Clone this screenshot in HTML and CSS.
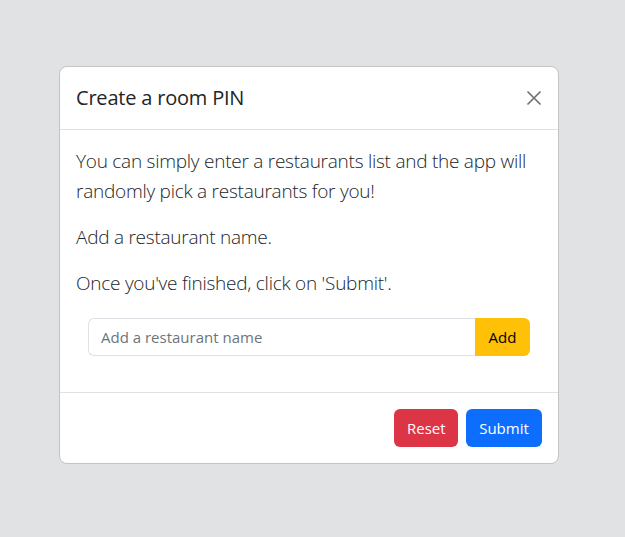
FILE: index.html
```html
<!DOCTYPE html>
<html lang="en">
<head>
<meta charset="utf-8">
<title>Create a room PIN</title>
<link rel="stylesheet" href="styles.css">
</head>
<body>
<div class="backdrop">
  <div class="modal">
    <div class="modal-header">
      <h5 class="modal-title">Create a room PIN</h5>
      <button class="btn-close" aria-label="Close">
        <svg width="16" height="16" viewBox="0 0 16 16"><path d="M1.5 1.5 L14.5 14.5 M14.5 1.5 L1.5 14.5" stroke="#000" stroke-width="1.7" fill="none"/></svg>
      </button>
    </div>
    <div class="modal-body">
      <p class="lead">You can simply enter a restaurants list and the app will randomly pick a restaurants for you!</p>
      <p class="lead">Add a restaurant name.</p>
      <p class="lead">Once you've finished, click on 'Submit'.</p>
      <div class="input-group">
        <input class="form-control" type="text" placeholder="Add a restaurant name">
        <button class="btn btn-warning">Add</button>
      </div>
    </div>
    <div class="modal-footer">
      <button class="btn btn-danger">Reset</button>
      <button class="btn btn-primary">Submit</button>
    </div>
  </div>
</div>
</body>
</html>
```
FILE: styles.css
```css
* { box-sizing: border-box; }
html, body { margin: 0; padding: 0; }
body {
  font-family: "Open Sans", "Noto Sans", sans-serif;
  color: #212529;
  background: #e1e2e4;
  width: 625px;
  height: 537px;
}
.backdrop {
  padding-top: 66px;
  padding-left: 59px;
}
.modal {
  width: 500px;
  background: #fff;
  border: 1px solid #c3c4c6;
  border-radius: 8px;
}
.modal-header {
  display: flex;
  align-items: center;
  justify-content: space-between;
  padding: 16px 16px;
  border-bottom: 1px solid #dee2e6;
  height: 63px;
}
.modal-title {
  margin: 0;
  font-size: 20px;
  font-weight: 500;
  line-height: 30px;
  letter-spacing: -0.2px;
}
.btn-close {
  border: 0;
  background: transparent;
  padding: 4px;
  margin-right: -4px;
  opacity: 0.55;
  display: flex;
}
.modal-body {
  padding: 16px 16px 0;
}
.lead {
  font-size: 19px;
  font-weight: 300;
  line-height: 30px;
  margin: 0 0 16px;
  letter-spacing: -0.25px;
}
.input-group {
  display: flex;
  margin: 20px 12px 36px;
  height: 38px;
}
.form-control {
  flex: 1;
  min-width: 0;
  border: 1px solid #dee2e6;
  border-right: 0;
  border-radius: 6px 0 0 6px;
  padding: 6px 12px;
  font-family: inherit;
  font-size: 15px;
  color: #212529;
  outline: none;
}
.form-control::placeholder { color: #6c757d; }
.btn {
  font-family: inherit;
  font-size: 15px;
  line-height: 24px;
  padding: 6px 12px;
  border: 1px solid transparent;
  border-radius: 6px;
  cursor: pointer;
}
.btn-warning {
  background: #ffc107;
  color: #000;
  border-radius: 0 6px 6px 0;
  width: 55px;
}
.btn-danger { background: #dc3545; color: #fff; width: 64px; }
.btn-primary { background: #0d6efd; color: #fff; width: 76px; }
.modal-footer {
  display: flex;
  justify-content: flex-end;
  gap: 8px;
  border-top: 1px solid #dee2e6;
  padding: 16px 16px 16px;
}
```
